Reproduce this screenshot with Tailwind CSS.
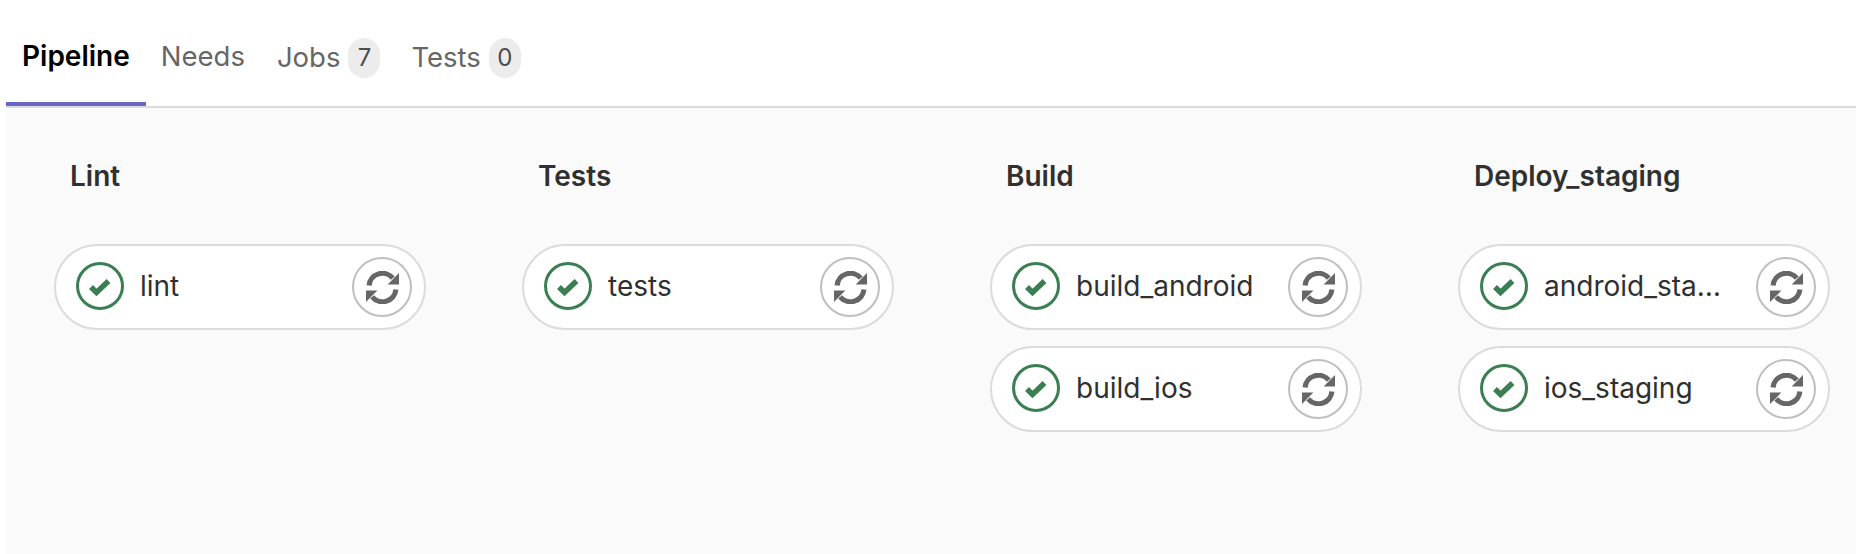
<!DOCTYPE html>
<html lang="en">
<head>
  <meta charset="UTF-8" />
  <title>Pipeline</title>
  <script src="https://cdn.jsdelivr.net/npm/@tailwindcss/browser@4"></script>
</head>
<body class="bg-white h-[554px] overflow-hidden pl-[6px] font-['Inter',sans-serif] text-[#303030]">

  <!-- tabs -->
  <nav class="flex h-[108px] pt-[32px] border-b-2 border-[#dbdbdb] text-[27.5px] text-[#666666]">
    <a class="h-[74px] px-4 pt-[4px] border-b-4 border-[#6666c4] font-semibold text-[28px] text-black leading-[40px]">Pipeline</a>
    <a class="h-[74px] pl-[15px] pr-4 pt-[4px] leading-[40px]">Needs</a>
    <a class="h-[74px] pl-4 pr-4 pt-[6px] flex gap-2 items-start"><span class="pt-[2px] leading-[34px]">Jobs</span><span class="w-[32px] h-[40px] rounded-[16px] bg-[#ececec] text-[24px] leading-[40px] text-center text-[#4d4d4d]">7</span></a>
    <a class="h-[74px] pl-[15px] pr-4 pt-[6px] flex gap-2 items-start"><span class="pt-[2px] leading-[34px]">Tests</span><span class="w-[32px] h-[40px] rounded-[16px] bg-[#ececec] text-[24px] leading-[40px] text-center text-[#4d4d4d]">0</span></a>
  </nav>

  <div class="bg-[#fafafa] h-[446px] flex pt-[50px] pl-[48px]">

    <section class="w-[468px] shrink-0">
      <h2 class="pl-4 text-[28px] leading-[36px] font-semibold mb-[50px]">Lint</h2>
      <div class="w-[372px] h-[86px] rounded-[43px] border-2 border-[#dbdbdb] bg-white flex items-center pl-[20px] pr-[12px]">
        <svg class="w-[48px] h-[48px] shrink-0 mb-[2px]" viewBox="0 0 48 48" fill="none" stroke="#3a7f52"><circle cx="24" cy="24" r="22.5" stroke-width="3"/><path d="M15 25l5.5 5.5 12-11.5" stroke-width="5.5"/></svg>
        <span class="ml-[16px] w-[190px] truncate text-[28px] mb-[2px]">lint</span>
        <button class="ml-auto w-[60px] h-[60px] rounded-full border-2 border-[#bfbfbf] flex items-center justify-center">
          <svg class="w-[33px] h-[33px]" viewBox="0 0 32 32" fill="#666666"><path d="M3 14A13 13 0 0 1 26 7M29 18A13 13 0 0 1 6 25" fill="none" stroke="#666666" stroke-width="5"/><path d="M32 2v11H21zM0 30V19h11z"/></svg>
        </button>
      </div>
    </section>

    <section class="w-[468px] shrink-0">
      <h2 class="pl-4 text-[28px] leading-[36px] font-semibold mb-[50px]">Tests</h2>
      <div class="w-[372px] h-[86px] rounded-[43px] border-2 border-[#dbdbdb] bg-white flex items-center pl-[20px] pr-[12px]">
        <svg class="w-[48px] h-[48px] shrink-0 mb-[2px]" viewBox="0 0 48 48" fill="none" stroke="#3a7f52"><circle cx="24" cy="24" r="22.5" stroke-width="3"/><path d="M15 25l5.5 5.5 12-11.5" stroke-width="5.5"/></svg>
        <span class="ml-[16px] w-[190px] truncate text-[28px] mb-[2px]">tests</span>
        <button class="ml-auto w-[60px] h-[60px] rounded-full border-2 border-[#bfbfbf] flex items-center justify-center">
          <svg class="w-[33px] h-[33px]" viewBox="0 0 32 32" fill="#666666"><path d="M3 14A13 13 0 0 1 26 7M29 18A13 13 0 0 1 6 25" fill="none" stroke="#666666" stroke-width="5"/><path d="M32 2v11H21zM0 30V19h11z"/></svg>
        </button>
      </div>
    </section>

    <section class="w-[468px] shrink-0">
      <h2 class="pl-4 text-[28px] leading-[36px] font-semibold mb-[50px]">Build</h2>
      <div class="flex flex-col gap-4">
        <div class="w-[372px] h-[86px] rounded-[43px] border-2 border-[#dbdbdb] bg-white flex items-center pl-[20px] pr-[12px]">
          <svg class="w-[48px] h-[48px] shrink-0 mb-[2px]" viewBox="0 0 48 48" fill="none" stroke="#3a7f52"><circle cx="24" cy="24" r="22.5" stroke-width="3"/><path d="M15 25l5.5 5.5 12-11.5" stroke-width="5.5"/></svg>
          <span class="ml-[16px] w-[190px] truncate text-[28px] mb-[2px]">build_android</span>
          <button class="ml-auto w-[60px] h-[60px] rounded-full border-2 border-[#bfbfbf] flex items-center justify-center">
            <svg class="w-[33px] h-[33px]" viewBox="0 0 32 32" fill="#666666"><path d="M3 14A13 13 0 0 1 26 7M29 18A13 13 0 0 1 6 25" fill="none" stroke="#666666" stroke-width="5"/><path d="M32 2v11H21zM0 30V19h11z"/></svg>
          </button>
        </div>
        <div class="w-[372px] h-[86px] rounded-[43px] border-2 border-[#dbdbdb] bg-white flex items-center pl-[20px] pr-[12px]">
          <svg class="w-[48px] h-[48px] shrink-0 mb-[2px]" viewBox="0 0 48 48" fill="none" stroke="#3a7f52"><circle cx="24" cy="24" r="22.5" stroke-width="3"/><path d="M15 25l5.5 5.5 12-11.5" stroke-width="5.5"/></svg>
          <span class="ml-[16px] w-[190px] truncate text-[28px] mb-[2px]">build_ios</span>
          <button class="ml-auto w-[60px] h-[60px] rounded-full border-2 border-[#bfbfbf] flex items-center justify-center">
            <svg class="w-[33px] h-[33px]" viewBox="0 0 32 32" fill="#666666"><path d="M3 14A13 13 0 0 1 26 7M29 18A13 13 0 0 1 6 25" fill="none" stroke="#666666" stroke-width="5"/><path d="M32 2v11H21zM0 30V19h11z"/></svg>
          </button>
        </div>
      </div>
    </section>

    <section class="w-[372px] shrink-0">
      <h2 class="pl-4 text-[28px] leading-[36px] font-semibold mb-[50px]">Deploy_staging</h2>
      <div class="flex flex-col gap-4">
        <div class="w-[372px] h-[86px] rounded-[43px] border-2 border-[#dbdbdb] bg-white flex items-center pl-[20px] pr-[12px]">
          <svg class="w-[48px] h-[48px] shrink-0 mb-[2px]" viewBox="0 0 48 48" fill="none" stroke="#3a7f52"><circle cx="24" cy="24" r="22.5" stroke-width="3"/><path d="M15 25l5.5 5.5 12-11.5" stroke-width="5.5"/></svg>
          <span class="ml-[16px] w-[180px] truncate text-[28px] mb-[2px]">android_staging</span>
          <button class="ml-auto w-[60px] h-[60px] rounded-full border-2 border-[#bfbfbf] flex items-center justify-center">
            <svg class="w-[33px] h-[33px]" viewBox="0 0 32 32" fill="#666666"><path d="M3 14A13 13 0 0 1 26 7M29 18A13 13 0 0 1 6 25" fill="none" stroke="#666666" stroke-width="5"/><path d="M32 2v11H21zM0 30V19h11z"/></svg>
          </button>
        </div>
        <div class="w-[372px] h-[86px] rounded-[43px] border-2 border-[#dbdbdb] bg-white flex items-center pl-[20px] pr-[12px]">
          <svg class="w-[48px] h-[48px] shrink-0 mb-[2px]" viewBox="0 0 48 48" fill="none" stroke="#3a7f52"><circle cx="24" cy="24" r="22.5" stroke-width="3"/><path d="M15 25l5.5 5.5 12-11.5" stroke-width="5.5"/></svg>
          <span class="ml-[16px] w-[180px] truncate text-[28px] mb-[2px]">ios_staging</span>
          <button class="ml-auto w-[60px] h-[60px] rounded-full border-2 border-[#bfbfbf] flex items-center justify-center">
            <svg class="w-[33px] h-[33px]" viewBox="0 0 32 32" fill="#666666"><path d="M3 14A13 13 0 0 1 26 7M29 18A13 13 0 0 1 6 25" fill="none" stroke="#666666" stroke-width="5"/><path d="M32 2v11H21zM0 30V19h11z"/></svg>
          </button>
        </div>
      </div>
    </section>

  </div>
</body>
</html>
